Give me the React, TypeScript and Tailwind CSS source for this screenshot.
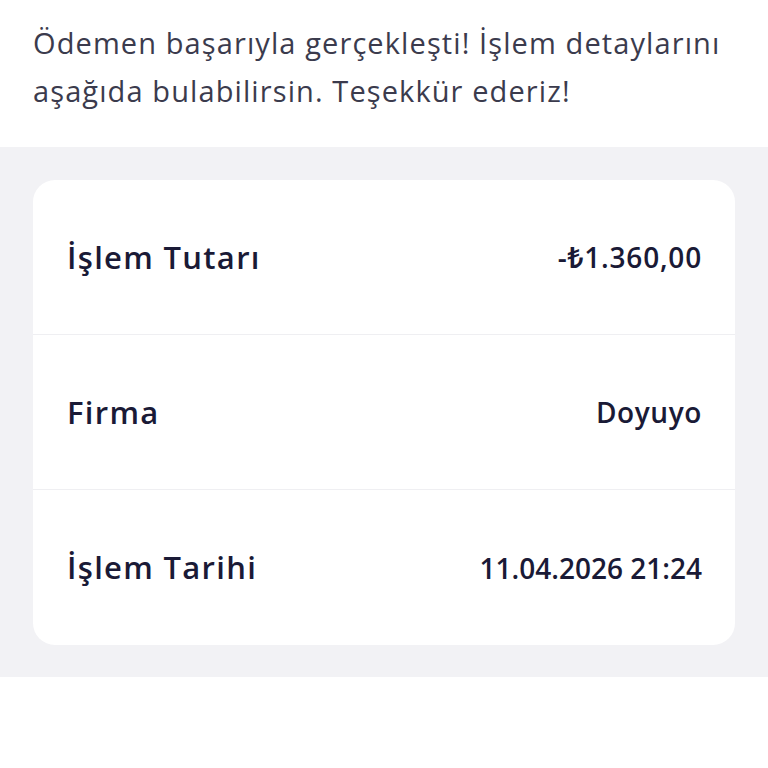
export default function App() {
  const rows = [
    { label: "İşlem Tutarı", value: "-₺1.360,00", vt: "tracking-[0.8px]" },
    { label: "Firma", value: "Doyuyo", vt: "tracking-[0.6px]" },
    { label: "İşlem Tarihi", value: "11.04.2026 21:24", vt: "tracking-[0px]" },
  ];
  return (
    <div className="w-[768px] h-[768px] bg-white flex flex-col" style={{ fontFamily: '"Open Sans", "Noto Sans", sans-serif' }}>
      <div className="px-[33px] pt-[19px] h-[147px] text-[29px] leading-[48px] tracking-[1.1px] text-[#3b3b4d]">
        Ödemen başarıyla gerçekleşti! İşlem detaylarını aşağıda bulabilirsin. Teşekkür ederiz!
      </div>
      <div className="bg-[#f2f2f5] h-[530px] px-[33px] pt-[33px]">
        <div className="bg-white rounded-[22px] flex flex-col">
          {rows.map((r, i) => (
            <div
              key={r.label}
              className={`h-[155px] flex items-center justify-between pl-[34px] pr-[33px] ${i < rows.length - 1 ? "border-b border-[#efeff2]" : ""}`}
            >
              <span className="text-[31px] font-semibold tracking-[1.3px] text-[#1a1a36]">{r.label}</span>
              <span className={`text-[28px] font-semibold text-[#1a1a36] ${r.vt}`}>{r.value}</span>
            </div>
          ))}
        </div>
      </div>
    </div>
  );
}
